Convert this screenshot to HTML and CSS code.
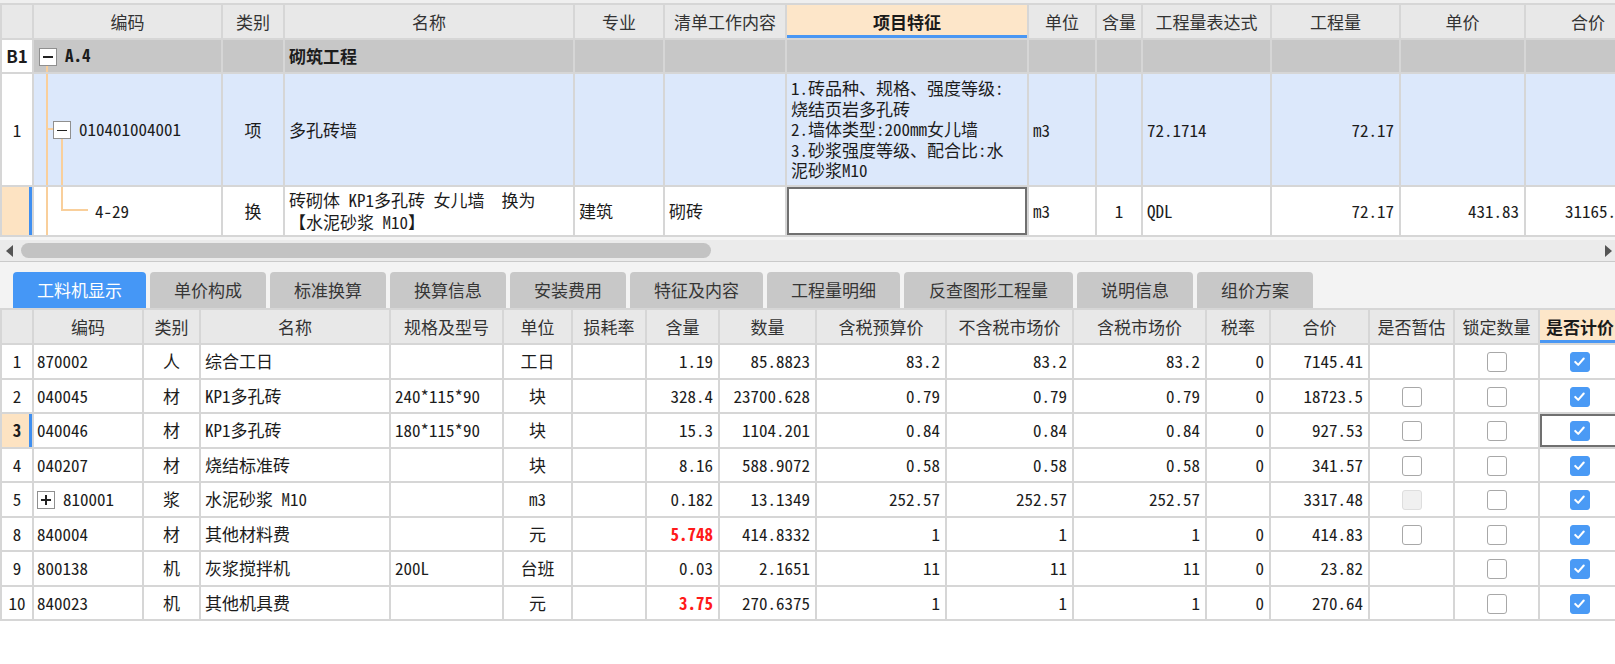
FILE: index.html
```html
<!DOCTYPE html>
<html lang="zh-CN">
<head>
<meta charset="utf-8">
<title>工料机显示</title>
<link rel="stylesheet" href="styles.css">
</head>
<body>
<div class="app">
  <div class="top-strip"></div>
  <div class="pane-top">
    <table class="grid t1">
      <colgroup>
        <col class="w32"><col class="w189"><col class="w62"><col class="w290"><col class="w90"><col class="w122"><col class="w242"><col class="w68"><col class="w46"><col class="w129"><col class="w129"><col class="w125"><col class="w126">
      </colgroup>
      <thead>
        <tr class="hd">
          <th></th><th>编码</th><th>类别</th><th>名称</th><th>专业</th><th>清单工作内容</th><th class="sel">项目特征</th><th>单位</th><th>含量</th><th>工程量表达式</th><th>工程量</th><th>单价</th><th>合价</th>
        </tr>
      </thead>
      <tbody>
        <tr class="r-b1">
          <td class="rn b">B1</td>
          <td class="code tree-b1"><span class="box minus"></span><b>A.4</b></td>
          <td></td>
          <td class="b">砌筑工程</td>
          <td></td><td></td><td></td><td></td><td></td><td></td><td></td><td></td><td></td>
        </tr>
        <tr class="r-qd">
          <td class="rn">1</td>
          <td class="code tree-qd"><span class="box minus"></span>010401004001</td>
          <td class="c">项</td>
          <td>多孔砖墙</td>
          <td></td>
          <td></td>
          <td class="feat">1.砖品种、规格、强度等级:<br>烧结页岩多孔砖<br>2.墙体类型:200mm女儿墙<br>3.砂浆强度等级、配合比:水<br>泥砂浆M10</td>
          <td>m3</td>
          <td></td>
          <td>72.1714</td>
          <td class="r">72.17</td>
          <td></td>
          <td></td>
        </tr>
        <tr class="r-de">
          <td class="rn cur"></td>
          <td class="code tree-de">4-29</td>
          <td class="c">换</td>
          <td class="two">砖砌体 KP1多孔砖 女儿墙&nbsp;&nbsp;换为<br>【水泥砂浆 M10】</td>
          <td>建筑</td>
          <td>砌砖</td>
          <td class="focus"></td>
          <td>m3</td>
          <td class="c">1</td>
          <td>QDL</td>
          <td class="r">72.17</td>
          <td class="r">431.83</td>
          <td class="r last">31165.17</td>
        </tr>
        <tr class="r-next">
          <td class="rn"></td><td class="code tree-next"></td><td></td><td></td><td></td><td></td><td></td><td></td><td></td><td></td><td></td><td></td><td></td>
        </tr>
      </tbody>
    </table>
  </div>

  <div class="hscroll">
    <span class="arrow left"></span>
    <div class="track"><div class="thumb"></div></div>
    <span class="arrow right"></span>
  </div>

  <div class="tabs">
    <div class="tab active">工料机显示</div>
    <div class="tab">单价构成</div>
    <div class="tab">标准换算</div>
    <div class="tab">换算信息</div>
    <div class="tab">安装费用</div>
    <div class="tab">特征及内容</div>
    <div class="tab">工程量明细</div>
    <div class="tab wide">反查图形工程量</div>
    <div class="tab">说明信息</div>
    <div class="tab">组价方案</div>
  </div>

  <div class="pane-bottom">
    <table class="grid t2">
      <colgroup>
        <col class="w32"><col class="w110"><col class="w57"><col class="w190"><col class="w113"><col class="w69"><col class="w74"><col class="w73"><col class="w97"><col class="w130"><col class="w127"><col class="w133"><col class="w64"><col class="w99"><col class="w85"><col class="w85"><col class="w82">
      </colgroup>
      <thead>
        <tr class="hd">
          <th></th><th>编码</th><th>类别</th><th>名称</th><th>规格及型号</th><th>单位</th><th>损耗率</th><th>含量</th><th>数量</th><th>含税预算价</th><th>不含税市场价</th><th>含税市场价</th><th>税率</th><th>合价</th><th>是否暂估</th><th>锁定数量</th><th class="sel">是否计价</th>
        </tr>
      </thead>
      <tbody>
        <tr>
          <td class="rn">1</td><td>870002</td><td class="c">人</td><td>综合工日</td><td></td><td class="c">工日</td><td></td><td class="r">1.19</td><td class="r">85.8823</td><td class="r">83.2</td><td class="r">83.2</td><td class="r">83.2</td><td class="r">0</td><td class="r">7145.41</td>
          <td class="c"></td><td class="c"><span class="cb"></span></td><td class="c"><span class="cb on"><svg viewBox="0 0 20 20"><path d="M5 10.5 8.5 14 15 6.5"/></svg></span></td>
        </tr>
        <tr>
          <td class="rn">2</td><td>040045</td><td class="c">材</td><td>KP1多孔砖</td><td>240*115*90</td><td class="c">块</td><td></td><td class="r">328.4</td><td class="r">23700.628</td><td class="r">0.79</td><td class="r">0.79</td><td class="r">0.79</td><td class="r">0</td><td class="r">18723.5</td>
          <td class="c"><span class="cb"></span></td><td class="c"><span class="cb"></span></td><td class="c"><span class="cb on"><svg viewBox="0 0 20 20"><path d="M5 10.5 8.5 14 15 6.5"/></svg></span></td>
        </tr>
        <tr>
          <td class="rn cur b">3</td><td>040046</td><td class="c">材</td><td>KP1多孔砖</td><td>180*115*90</td><td class="c">块</td><td></td><td class="r">15.3</td><td class="r">1104.201</td><td class="r">0.84</td><td class="r">0.84</td><td class="r">0.84</td><td class="r">0</td><td class="r">927.53</td>
          <td class="c"><span class="cb"></span></td><td class="c"><span class="cb"></span></td><td class="c focus"><span class="cb on"><svg viewBox="0 0 20 20"><path d="M5 10.5 8.5 14 15 6.5"/></svg></span></td>
        </tr>
        <tr>
          <td class="rn">4</td><td>040207</td><td class="c">材</td><td>烧结标准砖</td><td></td><td class="c">块</td><td></td><td class="r">8.16</td><td class="r">588.9072</td><td class="r">0.58</td><td class="r">0.58</td><td class="r">0.58</td><td class="r">0</td><td class="r">341.57</td>
          <td class="c"><span class="cb"></span></td><td class="c"><span class="cb"></span></td><td class="c"><span class="cb on"><svg viewBox="0 0 20 20"><path d="M5 10.5 8.5 14 15 6.5"/></svg></span></td>
        </tr>
        <tr>
          <td class="rn">5</td><td class="pl"><span class="box plus"></span>810001</td><td class="c">浆</td><td>水泥砂浆 M10</td><td></td><td class="c">m3</td><td></td><td class="r">0.182</td><td class="r">13.1349</td><td class="r">252.57</td><td class="r">252.57</td><td class="r">252.57</td><td class="r"></td><td class="r">3317.48</td>
          <td class="c"><span class="cb dis"></span></td><td class="c"><span class="cb"></span></td><td class="c"><span class="cb on"><svg viewBox="0 0 20 20"><path d="M5 10.5 8.5 14 15 6.5"/></svg></span></td>
        </tr>
        <tr>
          <td class="rn">8</td><td>840004</td><td class="c">材</td><td>其他材料费</td><td></td><td class="c">元</td><td></td><td class="r red">5.748</td><td class="r">414.8332</td><td class="r">1</td><td class="r">1</td><td class="r">1</td><td class="r">0</td><td class="r">414.83</td>
          <td class="c"><span class="cb"></span></td><td class="c"><span class="cb"></span></td><td class="c"><span class="cb on"><svg viewBox="0 0 20 20"><path d="M5 10.5 8.5 14 15 6.5"/></svg></span></td>
        </tr>
        <tr>
          <td class="rn">9</td><td>800138</td><td class="c">机</td><td>灰浆搅拌机</td><td>200L</td><td class="c">台班</td><td></td><td class="r">0.03</td><td class="r">2.1651</td><td class="r">11</td><td class="r">11</td><td class="r">11</td><td class="r">0</td><td class="r">23.82</td>
          <td class="c"></td><td class="c"><span class="cb"></span></td><td class="c"><span class="cb on"><svg viewBox="0 0 20 20"><path d="M5 10.5 8.5 14 15 6.5"/></svg></span></td>
        </tr>
        <tr>
          <td class="rn">10</td><td>840023</td><td class="c">机</td><td>其他机具费</td><td></td><td class="c">元</td><td></td><td class="r red">3.75</td><td class="r">270.6375</td><td class="r">1</td><td class="r">1</td><td class="r">1</td><td class="r">0</td><td class="r">270.64</td>
          <td class="c"></td><td class="c"><span class="cb"></span></td><td class="c"><span class="cb on"><svg viewBox="0 0 20 20"><path d="M5 10.5 8.5 14 15 6.5"/></svg></span></td>
        </tr>
      </tbody>
    </table>
  </div>
</div>
</body>
</html>
```

FILE: styles.css
```css
* { box-sizing: border-box; }
html, body { margin: 0; padding: 0; }
body {
  width: 1615px;
  height: 664px;
  overflow: hidden;
  background: #ffffff;
  font-family: "Noto Sans Mono CJK SC", "Noto Sans CJK SC", "Liberation Mono", monospace;
  font-size: 17px;
  color: #1c1c1c;
}
.app { width: 1615px; height: 664px; overflow: hidden; display: flex; flex-direction: column; }

.top-strip { height: 3px; background: #efefef; flex: none; }

.pane-top { height: 234px; overflow: hidden; flex: none; }
.pane-bottom { flex: 1; overflow: hidden; }

.grid { border-collapse: collapse; table-layout: fixed; }
.t1 { width: 1650px; }
.t2 { width: 1620px; }
.grid th, .grid td {
  border: 2px solid #d6d6d6;
  padding: 0 4px;
  white-space: nowrap;
  overflow: hidden;
  vertical-align: middle;
  text-align: left;
  line-height: 20px;
}
.grid th {
  background: #e8e8e8;
  font-family: "Noto Sans CJK SC", sans-serif;
  font-weight: 400;
  font-size: 17px;
  color: #333;
  text-align: center;
  padding: 0;
}
.grid th.sel {
  background: #fde6c9;
  font-weight: 700;
  color: #1a1a1a;
  box-shadow: inset 0 -3px 0 #4a97f3;
}
.grid td.c { text-align: center; }
.grid td.r { text-align: right; padding-right: 5px; }
.grid td.r.last { padding-right: 17px; }
.grid .b { font-weight: 700; }
.grid td.red { color: #ff1a1a; font-weight: 700; }

.grid td.rn { text-align: center; background: #fff; padding: 0; }
.grid td.rn.cur { background: #fde3c2; box-shadow: inset -3px 0 0 #3f8ff0; }
.grid td.focus { box-shadow: inset 0 0 0 2px #707070; }

/* column widths */
.w32 { width: 32px; } .w46 { width: 46px; } .w57 { width: 57px; } .w62 { width: 62px; }
.w64 { width: 64px; } .w68 { width: 68px; } .w69 { width: 69px; } .w73 { width: 73px; }
.w74 { width: 74px; } .w82 { width: 82px; } .w85 { width: 85px; } .w90 { width: 90px; }
.w97 { width: 97px; } .w99 { width: 99px; } .w110 { width: 110px; } .w113 { width: 113px; }
.w122 { width: 122px; } .w125 { width: 125px; } .w126 { width: 126px; } .w127 { width: 127px; }
.w129 { width: 129px; } .w130 { width: 130px; } .w133 { width: 133px; } .w189 { width: 189px; }
.w190 { width: 190px; } .w242 { width: 242px; } .w290 { width: 290px; }

/* top grid rows */
.t1 .hd th { height: 35px; }
.r-b1 td { height: 34px; background: #c7c7c7; }
.r-qd td { height: 113px; background: #dce8fb; }
.r-de td { height: 50px; }
.r-next td { height: 20px; }
.r-b1 td.rn, .r-qd td.rn { background: #fff; }
.r-b1 .b { font-family: "Noto Sans CJK SC", sans-serif; }

.feat { white-space: normal; line-height: 20.5px !important; padding-left: 4px !important; }
.two { line-height: 22px !important; }

/* tree */
.code { --tree: #f9cf9b; }
.tree-b1 {
  padding-left: 5px !important;
  background:
    linear-gradient(var(--tree), var(--tree)) 12px 25px / 2px 100% no-repeat,
    #c7c7c7 !important;
}
.tree-qd {
  padding-left: 19px !important;
  background:
    linear-gradient(var(--tree), var(--tree)) 12px 0 / 2px 100% no-repeat,
    linear-gradient(var(--tree), var(--tree)) 12px 54px / 8px 2px no-repeat,
    linear-gradient(var(--tree), var(--tree)) 27px 64px / 2px 100% no-repeat,
    #dce8fb !important;
}
.tree-de {
  padding-left: 61px !important;
  background:
    linear-gradient(var(--tree), var(--tree)) 12px 0 / 2px 100% no-repeat,
    linear-gradient(var(--tree), var(--tree)) 27px 0 / 2px 23px no-repeat,
    linear-gradient(var(--tree), var(--tree)) 27px 22px / 27px 2px no-repeat;
}
.tree-next {
  background: linear-gradient(var(--tree), var(--tree)) 12px 0 / 2px 100% no-repeat;
}

.box {
  display: inline-block;
  width: 18px;
  height: 18px;
  border: 1px solid #8f8f8f;
  background: #fff;
  vertical-align: middle;
  margin-right: 8px;
  position: relative;
  top: -1px;
}
.box::before {
  content: "";
  display: block;
  width: 10px;
  height: 1.5px;
  background: #222;
  margin: 7.5px auto 0;
}
.box.plus::after {
  content: "";
  display: block;
  width: 1.5px;
  height: 10px;
  background: #222;
  margin: -5.75px auto 0;
}
.grid td.pl { padding-left: 4px; }

/* horizontal scrollbar */
.hscroll {
  height: 25px;
  flex: none;
  background: #ebebeb;
  border-top: 3px solid #f4f4f4;
  border-bottom: 1px solid #cacaca;
  display: flex;
  align-items: center;
  padding: 0 3px 0 6px;
}
.arrow { width: 0; height: 0; border-top: 6px solid transparent; border-bottom: 6px solid transparent; flex: none; }
.arrow.left { border-right: 7px solid #555; }
.arrow.right { border-left: 7px solid #555; }
.track { flex: 1; height: 15px; padding-left: 8px; }
.thumb { width: 690px; height: 15px; border-radius: 8px; background: #c3c3c3; }

/* tabs */
.tabs {
  height: 46px;
  flex: none;
  background: #f3f3f3;
  display: flex;
  align-items: flex-end;
  gap: 4px;
  padding-left: 13px;
}
.tab {
  height: 36px;
  line-height: 36px;
  padding: 0 24px;
  background: #c8c8c8;
  border-radius: 4px 4px 0 0;
  font-family: "Noto Sans CJK SC", sans-serif;
  font-size: 17px;
  color: #363636;
  white-space: nowrap;
}
.tab.wide { padding: 0 25px; }
.tab.active { background: #4597f6; color: #fff; }

/* bottom grid */
.t2 .hd th { height: 35px; }
.t2 tbody td { height: 34.5px; }
.t2 td:nth-child(2) { padding-left: 3px; }

.cb {
  display: inline-block;
  width: 20px;
  height: 20px;
  border: 1.5px solid #a8a8a8;
  border-radius: 3px;
  background: #fff;
  vertical-align: middle;
}
.cb.on { background: #4a9af5; border-color: #4a9af5; }
.cb.on svg { display: block; width: 17px; height: 17px; }
.cb.on path { fill: none; stroke: #fff; stroke-width: 2.4; stroke-linecap: round; stroke-linejoin: round; }
.cb.dis { background: #f0f0f0; border-color: #dedede; }
```
